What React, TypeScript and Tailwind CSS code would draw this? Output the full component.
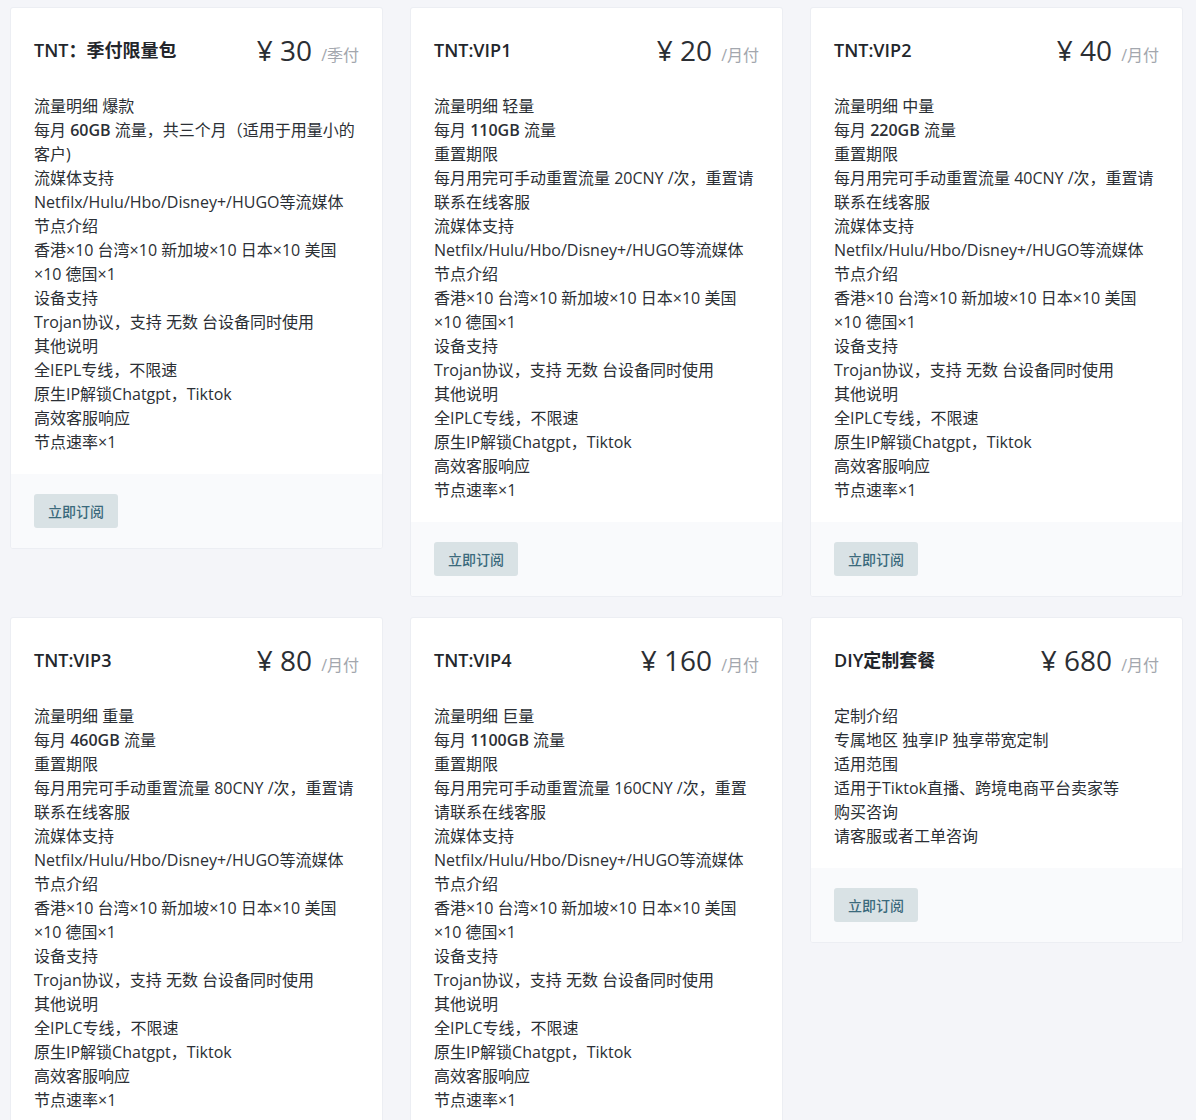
import React from 'react';

interface Plan {
  id: string;
  name: string;
  price: number;
  period: string;
  lines: React.ReactNode[];
}

const mediaLines = (reset: string): React.ReactNode[] => [
  '重置期限',
  reset,
  '流媒体支持',
  'Netfilx/Hulu/Hbo/Disney+/HUGO等流媒体',
  '节点介绍',
  '香港×10 台湾×10 新加坡×10 日本×10 美国×10 德国×1',
  '设备支持',
  'Trojan协议，支持 无数 台设备同时使用',
  '其他说明',
  '全IPLC专线，不限速',
  '原生IP解锁Chatgpt，Tiktok',
  '高效客服响应',
  '节点速率×1',
];

const plans: Plan[] = [
  {
    id: 'q',
    name: 'TNT：季付限量包',
    price: 30,
    period: '/季付',
    lines: [
      '流量明细 爆款',
      <>每月 <b className="font-semibold">60GB</b> 流量，共三个月（适用于用量小的客户)</>,
      '流媒体支持',
      'Netfilx/Hulu/Hbo/Disney+/HUGO等流媒体',
      '节点介绍',
      '香港×10 台湾×10 新加坡×10 日本×10 美国×10 德国×1',
      '设备支持',
      'Trojan协议，支持 无数 台设备同时使用',
      '其他说明',
      '全IEPL专线，不限速',
      '原生IP解锁Chatgpt，Tiktok',
      '高效客服响应',
      '节点速率×1',
    ],
  },
  {
    id: 'v1',
    name: 'TNT:VIP1',
    price: 20,
    period: '/月付',
    lines: [
      '流量明细 轻量',
      <>每月 <b className="font-semibold">110GB</b> 流量</>,
      ...mediaLines('每月用完可手动重置流量 20CNY /次，重置请联系在线客服'),
    ],
  },
  {
    id: 'v2',
    name: 'TNT:VIP2',
    price: 40,
    period: '/月付',
    lines: [
      '流量明细 中量',
      <>每月 <b className="font-semibold">220GB</b> 流量</>,
      ...mediaLines('每月用完可手动重置流量 40CNY /次，重置请联系在线客服'),
    ],
  },
  {
    id: 'v3',
    name: 'TNT:VIP3',
    price: 80,
    period: '/月付',
    lines: [
      '流量明细 重量',
      <>每月 <b className="font-semibold">460GB</b> 流量</>,
      ...mediaLines('每月用完可手动重置流量 80CNY /次，重置请联系在线客服'),
    ],
  },
  {
    id: 'v4',
    name: 'TNT:VIP4',
    price: 160,
    period: '/月付',
    lines: [
      '流量明细 巨量',
      <>每月 <b className="font-semibold">1100GB</b> 流量</>,
      ...mediaLines('每月用完可手动重置流量 160CNY /次，重置请联系在线客服'),
    ],
  },
  {
    id: 'diy',
    name: 'DIY定制套餐',
    price: 680,
    period: '/月付',
    lines: [
      '定制介绍',
      '专属地区 独享IP 独享带宽定制',
      '适用范围',
      '适用于Tiktok直播、跨境电商平台卖家等',
      '购买咨询',
      '请客服或者工单咨询',
    ],
  },
];

const PlanCard: React.FC<{ plan: Plan }> = ({ plan }) => (
  <div className="bg-white border border-[#eceef3] rounded-[3px] overflow-hidden self-start">
    <div className="px-[23px] pt-[22px] pb-5">
      <div className="flex items-center justify-between h-10">
        <h3 className="text-[18px] font-semibold text-[#23262b] leading-none">{plan.name}</h3>
        <div className="flex items-baseline">
          <span className="text-[28px] font-medium text-[#2b2e33] leading-none">¥ {plan.price}</span>
          <span className="ml-[9px] text-[16px] text-[#a3a7ae] leading-none">{plan.period}</span>
        </div>
      </div>
      <div className="mt-[24px] text-[16px] leading-6 text-[#2b2f35]">
        {plan.lines.map((l, i) => (
          <div key={i}>{l}</div>
        ))}
      </div>
    </div>
    <div className="bg-[#f9fafc] px-[23px] py-5">
      <button className="h-[34px] w-[84px] rounded-[3px] bg-[#d9e2e5] text-[14px] text-[#3b6a7c] font-medium">
        立即订阅
      </button>
    </div>
  </div>
);

export default function App() {
  return (
    <div
      className="min-h-[1120px] bg-[#f4f5f9] pl-[10px] pt-[7px] pb-6"
      style={{ fontFamily: '"Open Sans", "Noto Sans CJK SC", sans-serif' }}
    >
      <div className="grid grid-cols-[373px_373px_373px] gap-x-[27px] gap-y-[20px] items-start">
        {plans.map(p => (
          <PlanCard key={p.id} plan={p} />
        ))}
      </div>
    </div>
  );
}
